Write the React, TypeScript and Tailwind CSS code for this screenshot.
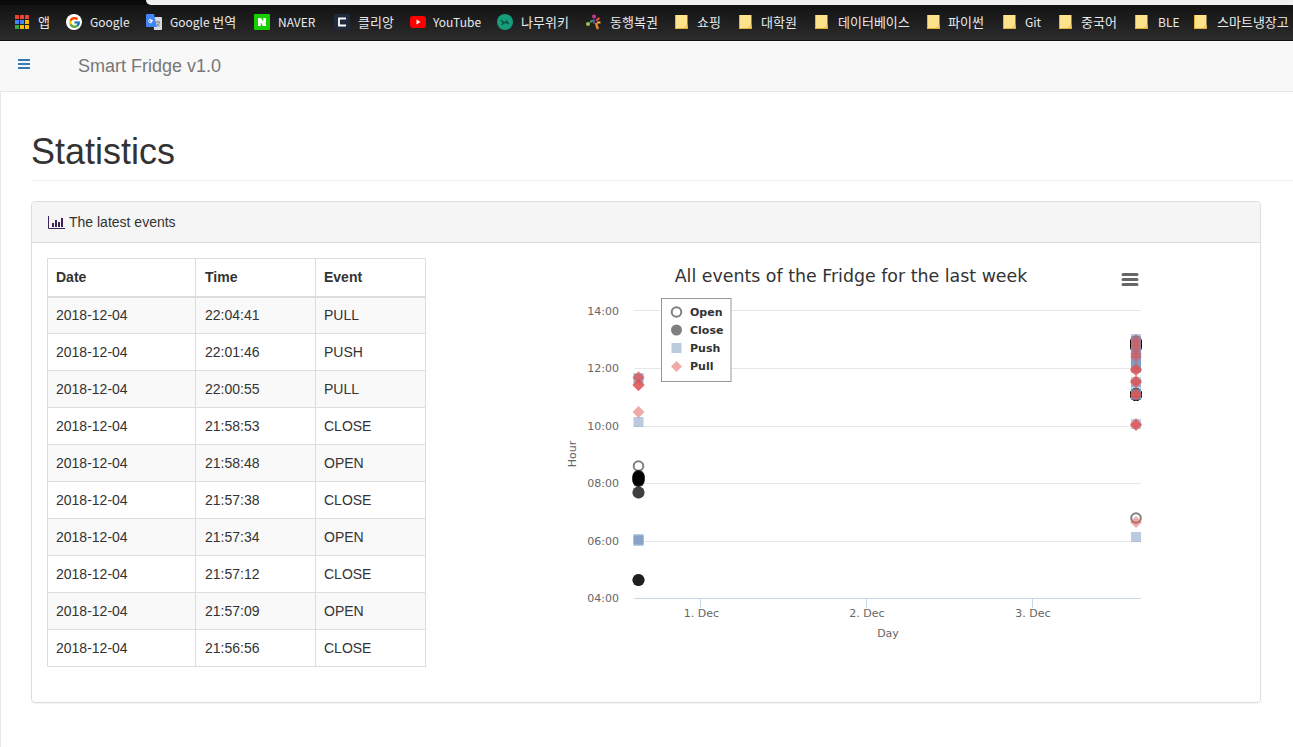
import React from 'react';
import { FcGoogle } from 'react-icons/fc';

const rows = [
  ['2018-12-04', '22:04:41', 'PULL'],
  ['2018-12-04', '22:01:46', 'PUSH'],
  ['2018-12-04', '22:00:55', 'PULL'],
  ['2018-12-04', '21:58:53', 'CLOSE'],
  ['2018-12-04', '21:58:48', 'OPEN'],
  ['2018-12-04', '21:57:38', 'CLOSE'],
  ['2018-12-04', '21:57:34', 'OPEN'],
  ['2018-12-04', '21:57:12', 'CLOSE'],
  ['2018-12-04', '21:57:09', 'OPEN'],
  ['2018-12-04', '21:56:56', 'CLOSE'],
];

const LEFT = 638.5;
const RIGHT = 1136;

// scatter points, page coordinates, duplicates darken the translucent markers
const openPts = [
  [LEFT, 466], [LEFT, 477], [LEFT, 480], [RIGHT, 518], [RIGHT, 341], [RIGHT, 344], [RIGHT, 347], [RIGHT, 394], [RIGHT, 395],
];
const closePts = [
  [LEFT, 476], [LEFT, 476], [LEFT, 477], [LEFT, 477], [LEFT, 478], [LEFT, 478], [LEFT, 479], [LEFT, 479], [LEFT, 480], [LEFT, 480],
  [LEFT, 481], [LEFT, 481], [LEFT, 492.5], [LEFT, 492.5], [LEFT, 580], [LEFT, 580], [LEFT, 580],
  [RIGHT, 342], [RIGHT, 342], [RIGHT, 342], [RIGHT, 343], [RIGHT, 343], [RIGHT, 344], [RIGHT, 344], [RIGHT, 345], [RIGHT, 345], [RIGHT, 345], [RIGHT, 346], [RIGHT, 346], [RIGHT, 347], [RIGHT, 347], [RIGHT, 347],
  [RIGHT, 394], [RIGHT, 394], [RIGHT, 394], [RIGHT, 394], [RIGHT, 394], [RIGHT, 395], [RIGHT, 395], [RIGHT, 395], [RIGHT, 395], [RIGHT, 395],
];
const pushPts = [
  [LEFT, 378], [LEFT, 379], [LEFT, 422], [LEFT, 539], [LEFT, 540], [LEFT, 541],
  [RIGHT, 339], [RIGHT, 341], [RIGHT, 341], [RIGHT, 343], [RIGHT, 343], [RIGHT, 345], [RIGHT, 345], [RIGHT, 347], [RIGHT, 347], [RIGHT, 349], [RIGHT, 349],
  [RIGHT, 354], [RIGHT, 354], [RIGHT, 359], [RIGHT, 359], [RIGHT, 364], [RIGHT, 364], [RIGHT, 368], [RIGHT, 368],
  [RIGHT, 382], [RIGHT, 384], [RIGHT, 394], [RIGHT, 394], [RIGHT, 395], [RIGHT, 395],
  [RIGHT, 424], [RIGHT, 537],
];
const pullPts = [
  [LEFT, 377], [LEFT, 378], [LEFT, 385], [LEFT, 385], [LEFT, 385], [LEFT, 412],
  [RIGHT, 340], [RIGHT, 344], [RIGHT, 348], [RIGHT, 354], [RIGHT, 357], [RIGHT, 369], [RIGHT, 370], [RIGHT, 370], [RIGHT, 381], [RIGHT, 382], [RIGHT, 382],
  [RIGHT, 394], [RIGHT, 395], [RIGHT, 395], [RIGHT, 424], [RIGHT, 425], [RIGHT, 425], [RIGHT, 522],
];

const yLabels = [
  ['14:00', 311], ['12:00', 368], ['10:00', 426], ['08:00', 483], ['06:00', 541],
] as const;

function AppsIcon() {
  const colors = ['#ea4335', '#ea4335', '#ea4335', '#4285f4', '#4285f4', '#fbbc05', '#34a853', '#fbbc05', '#fbbc05'];
  return (
    <svg width="16" height="16" viewBox="0 0 16 16" className="shrink-0">
      {colors.map((c, i) => (
        <rect key={i} x={1 + (i % 3) * 5} y={1 + Math.floor(i / 3) * 5} width="4" height="4" fill={c} />
      ))}
    </svg>
  );
}

function TranslateIcon() {
  return (
    <svg width="16" height="16" viewBox="0 0 16 16" className="shrink-0">
      <path d="M7 3h8a1 1 0 0 1 1 1v11a1 1 0 0 1-1 1H8z" fill="#dadce0" />
      <path d="M1 0h7l3 13H1a1 1 0 0 1-1-1V1a1 1 0 0 1 1-1z" fill="#4285f4" />
      <path d="M7 6.500H4.500v1H6a1.700 1.700 0 1 1-.5-1.700" fill="none" stroke="#fff" strokeWidth="0.9" />
      <path d="M10 8h4M12 7v1.500M10.800 12.500c1.600-.9 2.400-2.400 2.600-4.500M11 9.500c.5 1.300 1.500 2.400 2.800 3" fill="none" stroke="#777" strokeWidth="0.8" />
    </svg>
  );
}

function NaverIcon() {
  return (
    <svg width="16" height="16" viewBox="0 0 16 16" className="shrink-0">
      <rect width="16" height="16" rx="1" fill="#19ce00" />
      <path d="M4 4h3l2.200 3.400V4H12v8H9L6.800 8.600V12H4z" fill="#fff" />
    </svg>
  );
}

function ClienIcon() {
  return (
    <svg width="16" height="16" viewBox="0 0 16 16" className="shrink-0">
      <rect width="16" height="16" rx="2" fill="#1f2a3d" />
      <path d="M12 4.500H5v7h7" fill="none" stroke="#fff" strokeWidth="1.800" />
    </svg>
  );
}

function YoutubeIcon() {
  return (
    <svg width="16" height="16" viewBox="0 0 16 16" className="shrink-0">
      <rect x="0" y="2" width="16" height="12" rx="3" fill="#f00" />
      <path d="M6.500 5.500v5l4-2.500z" fill="#fff" />
    </svg>
  );
}

function NamuIcon() {
  return (
    <svg width="16" height="16" viewBox="0 0 16 16" className="shrink-0">
      <circle cx="8" cy="8" r="8" fill="#169e7c" />
      <path d="M4 6l2.500 2.500M6.500 8.500L5 11M6.500 8.500H10l2 1.500M10 8.500l-.5-2" fill="none" stroke="#0b4b3c" strokeWidth="1.300" />
    </svg>
  );
}

function LottoIcon() {
  return (
    <svg width="16" height="16" viewBox="0 0 16 16" className="shrink-0">
      <circle cx="2" cy="10" r="2" fill="#a5c23c" />
      <path d="M4 8l3-1.500" stroke="#2f9e6e" strokeWidth="2.200" />
      <circle cx="8" cy="2.500" r="2" fill="#c2398f" />
      <path d="M8 5.500v4" stroke="#6a4aa0" strokeWidth="2.200" />
      <path d="M10 6.500l3.500-2.500" stroke="#d8423f" strokeWidth="2.200" />
      <path d="M10 9c.5 2 1 4 2 6" stroke="#f08a24" strokeWidth="2.400" fill="none" />
      <path d="M11 8.500h3.500" stroke="#f5b82e" strokeWidth="2" />
    </svg>
  );
}

function FolderIcon() {
  return (
    <svg width="13" height="16" viewBox="0 0 13 16" className="shrink-0">
      <path d="M0 1h12.500v14H0z" fill="#ffe38a" />
      <path d="M.500 1v13.500H9M9 14.500l3.500-3.500v3.500z" fill="none" stroke="#e4b13c" />
    </svg>
  );
}

const bookmarks: { icon: React.ReactNode; label: React.ReactNode; key: string; box: string }[] = [
  { key: 'apps', icon: <AppsIcon />, label: <span className="text-[13px]">앱</span>, box: 'w-[52px] gap-2' },
  { key: 'google', icon: <span className="flex h-4 w-4 shrink-0 items-center justify-center rounded-full bg-white"><FcGoogle size={13} /></span>, label: 'Google', box: 'w-[80px] gap-2' },
  { key: 'translate', icon: <TranslateIcon />, label: <>Google <span className="text-[13px]">번역</span></>, box: 'w-[108px] gap-2' },
  { key: 'naver', icon: <NaverIcon />, label: 'NAVER', box: 'w-[80px] gap-2' },
  { key: 'clien', icon: <ClienIcon />, label: <span className="text-[13px]">클리앙</span>, box: 'w-[76px] gap-2' },
  { key: 'youtube', icon: <YoutubeIcon />, label: 'YouTube', box: 'w-[87px] gap-[7px]' },
  { key: 'namu', icon: <NamuIcon />, label: <span className="text-[13px]">나무위키</span>, box: 'w-[89px] gap-2' },
  { key: 'lotto', icon: <LottoIcon />, label: <span className="text-[13px]">동행복권</span>, box: 'w-[89px] gap-2' },
  { key: 'shop', icon: <FolderIcon />, label: <span className="text-[13px]">쇼핑</span>, box: 'w-[64px] gap-[9px]' },
  { key: 'school', icon: <FolderIcon />, label: <span className="text-[13px]">대학원</span>, box: 'w-[76px] gap-[9px]' },
  { key: 'db', icon: <FolderIcon />, label: <span className="text-[13px]">데이터베이스</span>, box: 'w-[112px] gap-[10px]' },
  { key: 'python', icon: <FolderIcon />, label: <span className="text-[13px]">파이썬</span>, box: 'w-[76px] gap-2' },
  { key: 'git', icon: <FolderIcon />, label: 'Git', box: 'w-[56px] gap-[9px]' },
  { key: 'chinese', icon: <FolderIcon />, label: <span className="text-[13px]">중국어</span>, box: 'w-[76px] gap-[9px]' },
  { key: 'ble', icon: <FolderIcon />, label: 'BLE', box: 'w-[59px] gap-[10px]' },
  { key: 'fridge', icon: <FolderIcon />, label: <span className="text-[13px]">스마트냉장고</span>, box: 'w-[99px] gap-[10px]' },
];

function Chart() {
  return (
    <svg viewBox="551 258 600 400" className="ml-[125px] h-[400px] w-[600px] shrink-0 font-['DejaVu_Sans',sans-serif]">
      <text x="851" y="282" textAnchor="middle" fontSize="17.400" fill="#333">All events of the Fridge for the last week</text>

      {/* context menu */}
      <path d="M1123 274.500h14M1123 279.500h14M1123 284.500h14" stroke="#666" strokeWidth="3" strokeLinecap="round" />

      {/* grid */}
      {[310.5, 368.5, 426.5, 483.5, 541.5].map((y) => (
        <line key={y} x1="634" x2="1141" y1={y} y2={y} stroke="#e6e6e6" />
      ))}
      <line x1="634" x2="1141" y1="598.5" y2="598.5" stroke="#ccd6eb" />
      {[700.5, 866.5, 1032.5].map((x) => (
        <line key={x} x1={x} x2={x} y1="598" y2="608" stroke="#ccd6eb" />
      ))}

      {/* axis labels */}
      {yLabels.map(([label, y]) => (
        <text key={label} x="619" y={y + 4} textAnchor="end" fontSize="11" fill="#666">{label}</text>
      ))}
      <text x="619" y="602" textAnchor="end" fontSize="11" fill="#666">04:00</text>
      <text x="701.500" y="617" textAnchor="middle" fontSize="11" fill="#666">1. Dec</text>
      <text x="867" y="617" textAnchor="middle" fontSize="11" fill="#666">2. Dec</text>
      <text x="1033" y="617" textAnchor="middle" fontSize="11" fill="#666">3. Dec</text>
      <text x="888" y="637" textAnchor="middle" fontSize="11" fill="#666">Day</text>
      <text x="0" y="0" transform="translate(575.500 454) rotate(-90)" textAnchor="middle" fontSize="11" fill="#666">Hour</text>

      {/* series */}
      {openPts.map(([x, y], i) => (
        <circle key={i} cx={x} cy={y} r="4.800" fill="#fff" stroke="rgba(0,0,0,0.5)" strokeWidth="2" />
      ))}
      {closePts.map(([x, y], i) => (
        <circle key={i} cx={x} cy={y} r="6" fill="rgba(0,0,0,0.5)" />
      ))}
      {pushPts.map(([x, y], i) => (
        <rect key={i} x={x - 5} y={y - 5} width="10" height="10" fill="rgba(119,152,191,0.5)" />
      ))}
      {pullPts.map(([x, y], i) => (
        <path key={i} d={`M${x} ${y - 6}L${x + 6} ${y}L${x} ${y + 6}L${x - 6} ${y}Z`} fill="rgba(223,83,83,0.5)" />
      ))}

      {/* legend */}
      <rect x="661.500" y="298.500" width="69.500" height="83" fill="#fff" stroke="#999" />
      <circle cx="676.500" cy="312" r="4.800" fill="#fff" stroke="rgba(0,0,0,0.5)" strokeWidth="2" />
      <circle cx="676.500" cy="330" r="5.500" fill="rgba(0,0,0,0.5)" />
      <rect x="671.500" y="343" width="10" height="10" fill="rgba(119,152,191,0.5)" />
      <path d="M676.500 361l5.500 5.500-5.500 5.500-5.500-5.500z" fill="rgba(223,83,83,0.5)" />
      <g fontSize="11" fontWeight="700" fill="#333">
        <text x="690" y="316">Open</text>
        <text x="690" y="334">Close</text>
        <text x="690" y="352">Push</text>
        <text x="690" y="370">Pull</text>
      </g>
    </svg>
  );
}

export default function App() {
  return (
    <div className="flex h-[747px] flex-col overflow-hidden bg-white font-['Liberation_Sans',Arial,sans-serif] text-[#333]">
      {/* browser chrome */}
      <div className="flex h-[5px] bg-[#0a0a0a]">
        <div className="w-[146px]" />
        <div className="flex-1 rounded-bl-[6px] bg-[#eff0f2]" />
      </div>
      <div className="flex h-[36px] items-center overflow-hidden border-b border-[#141414] bg-gradient-to-b from-[#131313] to-[#2c2c2c] pb-[1px] pl-[14px] font-['Noto_Sans_CJK_KR','Liberation_Sans',sans-serif] text-[12px] whitespace-nowrap text-[#e8eaed]">
        {bookmarks.map((b) => (
          <div key={b.key} className={`flex shrink-0 items-center ${b.box}`}>
            {b.icon}
            <span>{b.label}</span>
          </div>
        ))}
      </div>

      {/* navbar */}
      <div className="flex h-[51px] shrink-0 border-b border-[#e7e7e7] bg-[#f8f8f8]">
        <svg width="12" height="10" viewBox="0 0 12 10" className="mt-[18px] ml-[18px] shrink-0">
          <path d="M0 1h12M0 5h12M0 9h12" stroke="#337ab7" strokeWidth="2" />
        </svg>
        <span className="mt-[15px] ml-[48px] text-[18px] leading-[20px] text-[#777]">Smart Fridge v1.0</span>
      </div>

      {/* page */}
      <div className="flex-1 border-l border-[#e7e7e7]">
        <div className="ml-[30px] border-b border-[#eee] pt-[40px] pb-[8px]">
          <h1 className="text-[36px] leading-[40px] font-medium">Statistics</h1>
        </div>

        <div className="mt-[20px] ml-[30px] h-[502px] w-[1230px] rounded-[4px] border border-[#ddd] shadow-[0_1px_1px_rgba(0,0,0,0.05)]">
          <div className="flex h-[41px] items-center gap-[4px] rounded-t-[3px] border-b border-[#ddd] bg-[#f5f5f5] pl-[16px] text-[14px]">
            <svg width="17" height="13" viewBox="0 0 17 13">
              <path d="M.500 0v12.500H17" fill="none" stroke="#3a2458" />
              <path d="M4 7h2v4H4zM7 4h2v7H7zM10 6h2v5h-2zM13 2h2v9h-2z" fill="#3a2458" />
            </svg>
            <span>The latest events</span>
          </div>
          <div className="flex p-[15px]">
            <table className="w-[378px] shrink-0 table-fixed border-collapse text-[14px]">
              <colgroup>
                <col className="w-[148px]" />
                <col className="w-[120px]" />
                <col className="w-[110px]" />
              </colgroup>
              <thead>
                <tr className="h-[38px] border-b-2 border-[#ddd]">
                  <th className="border border-[#ddd] px-2 text-left font-bold">Date</th>
                  <th className="border border-[#ddd] pr-2 pl-[9px] text-left font-bold">Time</th>
                  <th className="border border-[#ddd] px-2 text-left font-bold">Event</th>
                </tr>
              </thead>
              <tbody>
                {rows.map(([date, time, event], i) => (
                  <tr key={i} className={i % 2 === 0 ? 'h-[37px] bg-[#f9f9f9]' : 'h-[37px]'}>
                    <td className="border border-[#ddd] px-2 py-0">{date}</td>
                    <td className="border border-[#ddd] py-0 pr-2 pl-[9px]">{time}</td>
                    <td className="border border-[#ddd] px-2 py-0">{event}</td>
                  </tr>
                ))}
              </tbody>
            </table>
            <Chart />
          </div>
        </div>
      </div>
    </div>
  );
}
